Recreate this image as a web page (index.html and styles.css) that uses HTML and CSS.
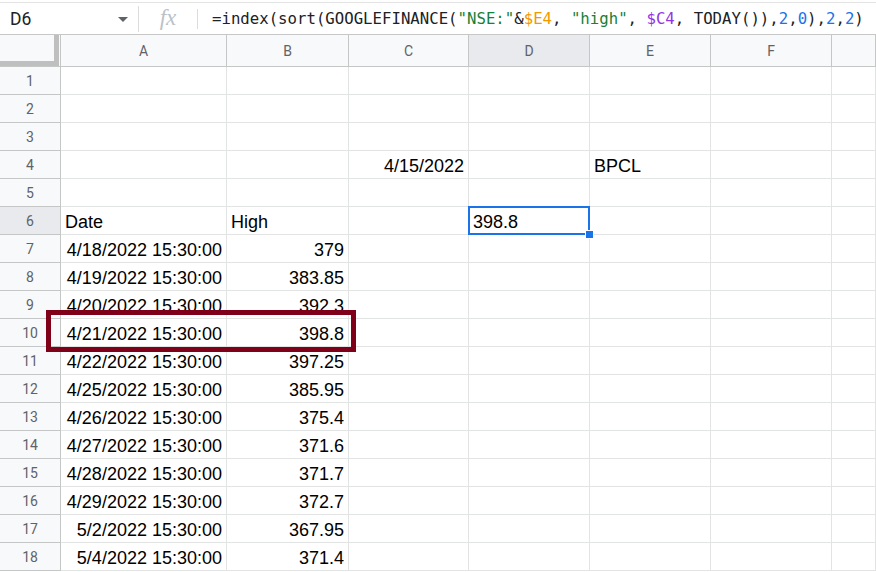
FILE: index.html
```html
<!DOCTYPE html>
<html>
<head>
<meta charset="utf-8">
<link rel="stylesheet" href="styles.css">
</head>
<body>
<div class="formula-bar">
  <div class="name-box"><span class="name">D6</span><span class="caret"></span></div>
  <div class="sep tall"></div>
  <div class="fx">fx</div>
  <div class="sep"></div>
  <div class="formula">=index(sort(GOOGLEFINANCE(<span class="str">"NSE:"</span>&amp;<span class="ref1">$E4</span>, <span class="str">"high"</span>, <span class="ref2">$C4</span>, TODAY()),<span class="num">2</span>,<span class="num">0</span>),<span class="num">2</span>,<span class="num">2</span>)</div>
</div>
<div class="sheet">
  <div class="corner"></div>
  <div class="ch">A</div><div class="ch">B</div><div class="ch">C</div><div class="ch sel">D</div><div class="ch">E</div><div class="ch">F</div><div class="ch"></div>

  <div class="rh">1</div><div class="c"></div><div class="c"></div><div class="c"></div><div class="c"></div><div class="c"></div><div class="c"></div><div class="c"></div>
  <div class="rh">2</div><div class="c"></div><div class="c"></div><div class="c"></div><div class="c"></div><div class="c"></div><div class="c"></div><div class="c"></div>
  <div class="rh">3</div><div class="c"></div><div class="c"></div><div class="c"></div><div class="c"></div><div class="c"></div><div class="c"></div><div class="c"></div>
  <div class="rh">4</div><div class="c"></div><div class="c"></div><div class="c r">4/15/2022</div><div class="c"></div><div class="c">BPCL</div><div class="c"></div><div class="c"></div>
  <div class="rh">5</div><div class="c"></div><div class="c"></div><div class="c"></div><div class="c"></div><div class="c"></div><div class="c"></div><div class="c"></div>
  <div class="rh sel">6</div><div class="c">Date</div><div class="c">High</div><div class="c"></div><div class="c active">398.8<span class="handle"></span></div><div class="c"></div><div class="c"></div><div class="c"></div>
  <div class="rh">7</div><div class="c r">4/18/2022 15:30:00</div><div class="c r">379</div><div class="c"></div><div class="c"></div><div class="c"></div><div class="c"></div><div class="c"></div>
  <div class="rh">8</div><div class="c r">4/19/2022 15:30:00</div><div class="c r">383.85</div><div class="c"></div><div class="c"></div><div class="c"></div><div class="c"></div><div class="c"></div>
  <div class="rh">9</div><div class="c r">4/20/2022 15:30:00</div><div class="c r">392.3</div><div class="c"></div><div class="c"></div><div class="c"></div><div class="c"></div><div class="c"></div>
  <div class="rh">10</div><div class="c r">4/21/2022 15:30:00</div><div class="c r">398.8</div><div class="c"></div><div class="c"></div><div class="c"></div><div class="c"></div><div class="c"></div>
  <div class="rh">11</div><div class="c r">4/22/2022 15:30:00</div><div class="c r">397.25</div><div class="c"></div><div class="c"></div><div class="c"></div><div class="c"></div><div class="c"></div>
  <div class="rh">12</div><div class="c r">4/25/2022 15:30:00</div><div class="c r">385.95</div><div class="c"></div><div class="c"></div><div class="c"></div><div class="c"></div><div class="c"></div>
  <div class="rh">13</div><div class="c r">4/26/2022 15:30:00</div><div class="c r">375.4</div><div class="c"></div><div class="c"></div><div class="c"></div><div class="c"></div><div class="c"></div>
  <div class="rh">14</div><div class="c r">4/27/2022 15:30:00</div><div class="c r">371.6</div><div class="c"></div><div class="c"></div><div class="c"></div><div class="c"></div><div class="c"></div>
  <div class="rh">15</div><div class="c r">4/28/2022 15:30:00</div><div class="c r">371.7</div><div class="c"></div><div class="c"></div><div class="c"></div><div class="c"></div><div class="c"></div>
  <div class="rh">16</div><div class="c r">4/29/2022 15:30:00</div><div class="c r">372.7</div><div class="c"></div><div class="c"></div><div class="c"></div><div class="c"></div><div class="c"></div>
  <div class="rh">17</div><div class="c r">5/2/2022 15:30:00</div><div class="c r">367.95</div><div class="c"></div><div class="c"></div><div class="c"></div><div class="c"></div><div class="c"></div>
  <div class="rh">18</div><div class="c r">5/4/2022 15:30:00</div><div class="c r">371.4</div><div class="c"></div><div class="c"></div><div class="c"></div><div class="c"></div><div class="c"></div>

  <div class="highlight-box"></div>
</div>
</body>
</html>
```
FILE: styles.css
```css
html, body {
  margin: 0;
  padding: 0;
  background: #fff;
  overflow: hidden;
}

body {
  width: 876px;
  height: 572px;
  font-family: "Liberation Sans", Arial, sans-serif;
}

.formula-bar {
  margin-top: 2px;
  height: 31px;
  border-top: 1px solid #e3e3e3;
  border-bottom: 1px solid #c7c7c7;
  display: flex;
  align-items: center;
  background: #fff;
}

.name-box {
  width: 138px;
  box-sizing: border-box;
  padding: 0 10px 0 10px;
  display: flex;
  align-items: center;
  justify-content: space-between;
}

.name {
  font-family: Roboto, "Liberation Sans", sans-serif;
  font-size: 17.5px;
  color: #202124;
}

.caret {
  width: 0;
  height: 0;
  border-left: 5px solid transparent;
  border-right: 5px solid transparent;
  border-top: 5px solid #5f6368;
  margin-top: 2px;
}

.sep {
  width: 1px;
  height: 20px;
  background: #dadce0;
}

.sep.tall {
  height: 26px;
}

.fx {
  width: 58px;
  text-align: center;
  font-family: "Liberation Serif", serif;
  font-style: italic;
  font-size: 23px;
  color: #bdc1c6;
  line-height: 1;
  padding-bottom: 2px;
}

.formula {
  padding-left: 14px;
  font-family: "DejaVu Sans Mono", "Liberation Mono", monospace;
  font-size: 15.7px;
  color: #202124;
  white-space: pre;
}

.str { color: #188038; }
.ref1 { color: #f29900; }
.ref2 { color: #9334e6; }
.num { color: #1a73e8; }

.sheet {
  position: relative;
  display: grid;
  grid-template-columns: 61px 166px 122px 120px 121px 121px 121px 1fr;
  grid-template-rows: 32px;
  grid-auto-rows: 28px;
}

.corner {
  position: relative;
  background: #f8f9fa;
  border-right: 1px solid #c4c7c5;
  border-bottom: 1px solid #c4c7c5;
  box-sizing: border-box;
}

.corner::before {
  content: "";
  position: absolute;
  left: 54px;
  top: 0;
  width: 5px;
  bottom: 0;
  background: #bfbfbf;
}

.corner::after {
  content: "";
  position: absolute;
  left: 0;
  right: 1px;
  bottom: 0;
  height: 5px;
  background: #bfbfbf;
}

.ch {
  background: #f8f9fa;
  border-right: 1px solid #c4c7c5;
  border-bottom: 1px solid #c4c7c5;
  box-sizing: border-box;
  display: flex;
  align-items: center;
  justify-content: center;
  font-family: Roboto, "Liberation Sans", sans-serif;
  font-size: 14px;
  color: #5f6368;
}

.ch.sel, .rh.sel {
  background: #e8eaed;
}

.rh {
  background: #f8f9fa;
  border-right: 1px solid #c4c7c5;
  border-bottom: 1px solid #c4c7c5;
  box-sizing: border-box;
  display: flex;
  align-items: center;
  justify-content: center;
  font-family: Roboto, "Liberation Sans", sans-serif;
  font-size: 14px;
  color: #5f6368;
}

.c {
  position: relative;
  border-right: 1px solid #e2e3e3;
  border-bottom: 1px solid #e2e3e3;
  box-sizing: border-box;
  display: flex;
  align-items: flex-end;
  padding: 0 4px 2px 4px;
  font-size: 18px;
  line-height: 20px;
  color: #000;
  white-space: nowrap;
}

.c.r {
  justify-content: flex-end;
}

.c.active::after {
  content: "";
  position: absolute;
  left: -1px;
  top: -1px;
  right: -1px;
  bottom: -1px;
  border: 2px solid #1a73e8;
}

.handle {
  position: absolute;
  right: -5px;
  bottom: -5px;
  width: 7px;
  height: 7px;
  background: #1a73e8;
  border: 1px solid #fff;
  z-index: 2;
}

.highlight-box {
  position: absolute;
  left: 46px;
  top: 275px;
  width: 310px;
  height: 42px;
  box-sizing: border-box;
  border: 5px solid #7f0019;
  pointer-events: none;
}
```
